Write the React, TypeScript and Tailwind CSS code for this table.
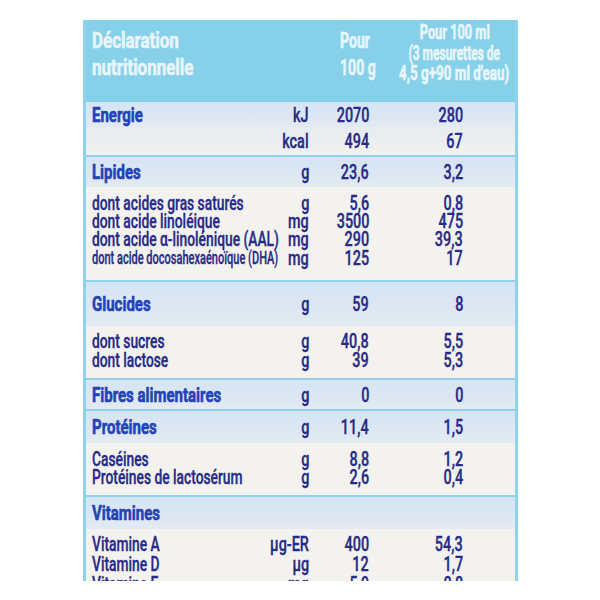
import React from "react";

const font = { fontFamily: 'Roboto, "Liberation Sans", Arial, sans-serif' };

type Row = { label: string; unit?: string; a?: string; b?: string };

const grid = "grid grid-cols-[159px_58px_60px_94px] pl-[6px] pr-[52px]";
const L = "inline-block whitespace-nowrap origin-left scale-x-[0.69]";
const R = "inline-block whitespace-nowrap origin-right scale-x-[0.72]";
const body = "text-[20px] leading-[20px] font-medium text-[#262b88] [-webkit-text-stroke:0.35px_#262b88]";

function Vals({ r }: { r: Row }) {
  return (
    <>
      <span className={`text-right ${body}`}><span className={R}>{r.unit}</span></span>
      <span className={`text-right ${body}`}><span className={R}>{r.a}</span></span>
      <span className={`text-right ${body}`}><span className={R}>{r.b}</span></span>
    </>
  );
}

function HeadRow({ r, h }: { r: Row; h: string }) {
  return (
    <div className={`${grid} ${h} items-center bg-gradient-to-b from-[#d5e4f4] to-[#e3eaf2]`}>
      <span className="text-[20px] leading-[20px] font-bold text-[#2443b6] [-webkit-text-stroke:0.6px_#2443b6]">
        <span className="inline-block whitespace-nowrap origin-left scale-x-[0.75]">{r.label}</span>
      </span>
      <Vals r={r} />
    </div>
  );
}

function DataRow({ r, h, small }: { r: Row; h: string; small?: boolean }) {
  return (
    <div className={`${grid} ${h} items-center`}>
      <span className={body}>
        {small ? (
          <span className="inline-block whitespace-nowrap origin-left scale-x-[0.58] text-[19px]">{r.label}</span>
        ) : (
          <span className={L}>{r.label}</span>
        )}
      </span>
      <Vals r={r} />
    </div>
  );
}

export default function App() {
  return (
    <div className="w-[600px] h-[600px] bg-white pt-[20px] pl-[83px]" style={font}>
      <div className="w-[435px] h-[561px] overflow-hidden border-l-[3px] border-r-[3px] border-[#8fd2ea] bg-[#f4f2ee]">
        {/* header */}
        <div className="flex h-[82px] bg-[#86d0ea] text-[#e8f6fb] font-bold [-webkit-text-stroke:0.6px_#e8f6fb]">
          <div className="w-[254px] shrink-0 pl-[6px] pt-[7px] text-[22px] leading-[27px]">
            <div className="origin-left scale-x-[0.77] whitespace-nowrap">Déclaration</div>
            <div className="origin-left scale-x-[0.77] whitespace-nowrap">nutritionnelle</div>
          </div>
          <div className="w-[54px] shrink-0 pt-[7px] text-[22px] leading-[27px]">
            <div className="origin-left scale-x-[0.64] whitespace-nowrap">Pour</div>
            <div className="origin-left scale-x-[0.64] whitespace-nowrap">100 g</div>
          </div>
          <div className="flex flex-1 min-w-0 flex-col items-center pt-[2px] text-[20px] leading-[20.5px]">
            <span className="inline-block origin-center scale-x-[0.64] whitespace-nowrap">Pour 100 ml</span>
            <span className="inline-block origin-center scale-x-[0.6] whitespace-nowrap">(3 mesurettes de</span>
            <span className="inline-block origin-center scale-x-[0.67] whitespace-nowrap">4,5 g+90 ml d'eau)</span>
          </div>
        </div>

        {/* Energie */}
        <div className="border-b-2 border-[#8fd2ea]">
          <HeadRow r={{ label: "Energie", unit: "kJ", a: "2070", b: "280" }} h="h-[25px]" />
          <div className="bg-gradient-to-b from-[#e6ecf1] to-[#f1f1ef]">
            <DataRow r={{ label: "", unit: "kcal", a: "494", b: "67" }} h="h-[28px]" />
          </div>
        </div>

        {/* Lipides */}
        <div className="border-b-2 border-[#8fd2ea]">
          <HeadRow r={{ label: "Lipides", unit: "g", a: "23,6", b: "3,2" }} h="h-[30px]" />
          <div className="pt-[6px] pb-[15px]">
            <DataRow r={{ label: "dont acides gras saturés", unit: "g", a: "5,6", b: "0,8" }} h="h-[18px]" />
            <DataRow r={{ label: "dont acide linoléique", unit: "mg", a: "3500", b: "475" }} h="h-[18px]" />
            <DataRow r={{ label: "dont acide α-linolénique (AAL)", unit: "mg", a: "290", b: "39,3" }} h="h-[18px]" />
            <DataRow r={{ label: "dont acide docosahexaénoïque (DHA)", unit: "mg", a: "125", b: "17" }} h="h-[18px]" small />
          </div>
        </div>

        {/* Glucides */}
        <div className="border-b-2 border-[#8fd2ea]">
          <HeadRow r={{ label: "Glucides", unit: "g", a: "59", b: "8" }} h="h-[44px]" />
          <div className="pt-[5px] pb-[9px]">
            <DataRow r={{ label: "dont sucres", unit: "g", a: "40,8", b: "5,5" }} h="h-[19px]" />
            <DataRow r={{ label: "dont lactose", unit: "g", a: "39", b: "5,3" }} h="h-[19px]" />
          </div>
        </div>

        {/* Fibres */}
        <div className="border-b-2 border-[#8fd2ea]">
          <HeadRow r={{ label: "Fibres alimentaires", unit: "g", a: "0", b: "0" }} h="h-[29px]" />
        </div>

        {/* Protéines */}
        <div className="border-b-2 border-[#8fd2ea]">
          <HeadRow r={{ label: "Protéines", unit: "g", a: "11,4", b: "1,5" }} h="h-[32px]" />
          <div className="pt-[6px] pb-[10px]">
            <DataRow r={{ label: "Caséines", unit: "g", a: "8,8", b: "1,2" }} h="h-[18px]" />
            <DataRow r={{ label: "Protéines de lactosérum", unit: "g", a: "2,6", b: "0,4" }} h="h-[18px]" />
          </div>
        </div>

        {/* Vitamines */}
        <div>
          <HeadRow r={{ label: "Vitamines" }} h="h-[32px]" />
          <div className="pt-[5px]">
            <DataRow r={{ label: "Vitamine A", unit: "µg-ER", a: "400", b: "54,3" }} h="h-[20px]" />
            <DataRow r={{ label: "Vitamine D", unit: "µg", a: "12", b: "1,7" }} h="h-[20px]" />
            <DataRow r={{ label: "Vitamine E", unit: "mg", a: "5,9", b: "0,8" }} h="h-[20px]" />
          </div>
        </div>
      </div>
    </div>
  );
}
